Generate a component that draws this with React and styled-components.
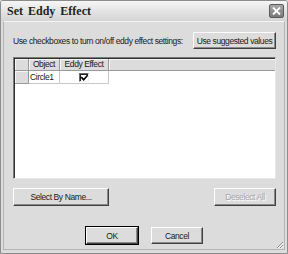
import React from 'react';
import styled, { createGlobalStyle } from 'styled-components';

const Global = createGlobalStyle`
  html, body { margin: 0; padding: 0; background: #dcdcdc; }
  body { font-family: "Liberation Sans", Arial, sans-serif; }
`;

const Window = styled.div`
  box-sizing: border-box;
  width: 288px;
  height: 254px;
  display: flex;
  flex-direction: column;
  background: #dcdcdc;
  border: 1px solid #8c8c8c;
  border-radius: 3px 3px 0 0;
  overflow: hidden;
`;

const TitleBar = styled.div`
  box-sizing: border-box;
  height: 20px;
  flex: none;
  display: flex;
  align-items: center;
  justify-content: space-between;
  padding: 0 3px 0 6px;
  background: linear-gradient(#f6f6f6, #e2e2e2 55%, #d4d4d4);
`;

const Title = styled.span`
  font-family: "Liberation Serif", "Times New Roman", serif;
  font-weight: bold;
  font-size: 12px;
  letter-spacing: 0px;
  word-spacing: 2px;
  color: #222;
`;

const CloseBtn = styled.div`
  box-sizing: border-box;
  width: 15px;
  height: 14px;
  border: 1px solid #5a5a5a;
  border-radius: 2px;
  background: linear-gradient(#a8a8a8, #7a7a7a);
  display: flex;
  align-items: center;
  justify-content: center;
`;

const Frame = styled.div`
  flex: 1;
  display: flex;
  padding: 0 2px 3px;
`;

const Panel = styled.div`
  position: relative;
  flex: 1;
  display: flex;
  flex-direction: column;
  border: 1px solid #b4b4b4;
  border-top-color: #f4f4f4;
  padding: 10px 8px 0 9px;
  font-size: 8.5px;
  letter-spacing: -0.4px;
  white-space: nowrap;
  color: #111;
`;

const TopRow = styled.div`
  display: flex;
  align-items: center;
  justify-content: space-between;
`;

const Label = styled.span`
  color: #1a1a1a;
`;

const Button = styled.button`
  box-sizing: border-box;
  width: ${p => p.$w}px;
  height: ${p => p.$h}px;
  padding: 0;
  margin: 0;
  font-family: inherit;
  font-size: inherit;
  letter-spacing: inherit;
  white-space: nowrap;
  color: ${p => (p.disabled ? '#a6a6a6' : '#1a1a1a')};
  text-shadow: ${p => (p.disabled ? '1px 1px 0 #fff' : 'none')};
  background: #dcdcdc;
  border: 1px solid;
  border-color: #ffffff #404040 #404040 #ffffff;
  box-shadow: ${p => (p.$default
    ? '0 0 0 1px #000, inset -1px -1px 0 #8a8a8a'
    : 'inset -1px -1px 0 #8a8a8a')};
  outline: none;
  cursor: default;
`;

const Grid = styled.div`
  box-sizing: border-box;
  margin-top: 8px;
  height: 122px;
  background: #fff;
  border: 1px solid;
  border-color: #7a7a7a #e8e8e8 #e8e8e8 #7a7a7a;
  box-shadow: inset 1px 1px 0 #303030;
  display: flex;
  flex-direction: column;
  padding: 1px 0 0 1px;
`;

const GridRow = styled.div`
  display: flex;
  height: ${p => p.$h}px;
  flex: none;
`;

const HeadCell = styled.div`
  box-sizing: border-box;
  width: ${p => (p.$w ? `${p.$w}px` : 'auto')};
  flex: ${p => (p.$w ? 'none' : '1')};
  background: #dcdcdc;
  border-right: ${p => (p.$w ? '1px solid #9a9a9a' : 'none')};
  border-bottom: 1px solid #9a9a9a;
  box-shadow: inset 1px 1px 0 #f6f6f6;
  display: flex;
  align-items: center;
  justify-content: center;
  line-height: 1;
  color: #1a1a1a;
`;

const Cell = styled.div`
  box-sizing: border-box;
  width: ${p => p.$w}px;
  flex: none;
  border-right: 1px solid #c8c8c8;
  border-bottom: 1px solid #c8c8c8;
  display: flex;
  align-items: center;
  justify-content: ${p => (p.$center ? 'center' : 'flex-start')};
  padding-left: ${p => (p.$center ? 0 : 1)}px;
  color: #1a1a1a;
`;

const Check = styled.div`
  box-sizing: border-box;
  width: 10px;
  height: 9px;
  border: 1px solid;
  border-color: #6a6a6a #f0f0f0 #f0f0f0 #6a6a6a;
  box-shadow: inset 1px 1px 0 #202020;
  background: #fff;
  display: flex;
  align-items: center;
  justify-content: center;
  padding: 1px 0 0 1px;
`;

const BottomRow = styled.div`
  display: flex;
  justify-content: space-between;
  margin-top: 9px;
`;

const Footer = styled.div`
  display: flex;
  justify-content: center;
  gap: 13px;
  margin-top: 21px;
`;

const Grip = styled.svg`
  position: absolute;
  right: 0;
  bottom: 0;
`;

export default function App() {
  return (
    <>
      <Global />
      <Window>
        <TitleBar>
          <Title>Set Eddy Effect</Title>
          <CloseBtn>
            <svg width="9" height="8" viewBox="0 0 9 8">
              <path d="M1 0.5 L8 7.5 M8 0.5 L1 7.5" stroke="#fff" strokeWidth="1.8" />
            </svg>
          </CloseBtn>
        </TitleBar>
        <Frame>
          <Panel>
            <TopRow>
              <Label>Use checkboxes to turn on/off eddy effect settings:</Label>
              <Button $w={83} $h={17}>Use suggested values</Button>
            </TopRow>
            <Grid>
              <GridRow $h={12}>
                <HeadCell $w={14} />
                <HeadCell $w={31}>Object</HeadCell>
                <HeadCell $w={49}>Eddy Effect</HeadCell>
                <HeadCell />
              </GridRow>
              <GridRow $h={13}>
                <HeadCell $w={14} />
                <Cell $w={31}>Circle1</Cell>
                <Cell $w={49} $center>
                  <Check>
                    <svg width="7" height="6" viewBox="0 0 7 6">
                      <path d="M0.8 2.6 L2.6 4.8 L6.2 0.8" stroke="#000" strokeWidth="1.6" fill="none" strokeLinecap="square" />
                    </svg>
                  </Check>
                </Cell>
              </GridRow>
            </Grid>
            <BottomRow>
              <Button $w={96} $h={18}>Select By Name...</Button>
              <Button $w={62} $h={18} disabled>Deselect All</Button>
            </BottomRow>
            <Footer>
              <Button $w={52} $h={17} $default>OK</Button>
              <Button $w={52} $h={17}>Cancel</Button>
            </Footer>
            <Grip width="8" height="8" viewBox="0 0 8 8">
              <path d="M7 1 L1 7 M7 4 L4 7" stroke="#8a8a8a" strokeWidth="1" />
              <path d="M7.5 2 L2 7.5 M7.5 5 L5 7.5" stroke="#fff" strokeWidth="1" />
            </Grip>
          </Panel>
        </Frame>
      </Window>
    </>
  );
}
